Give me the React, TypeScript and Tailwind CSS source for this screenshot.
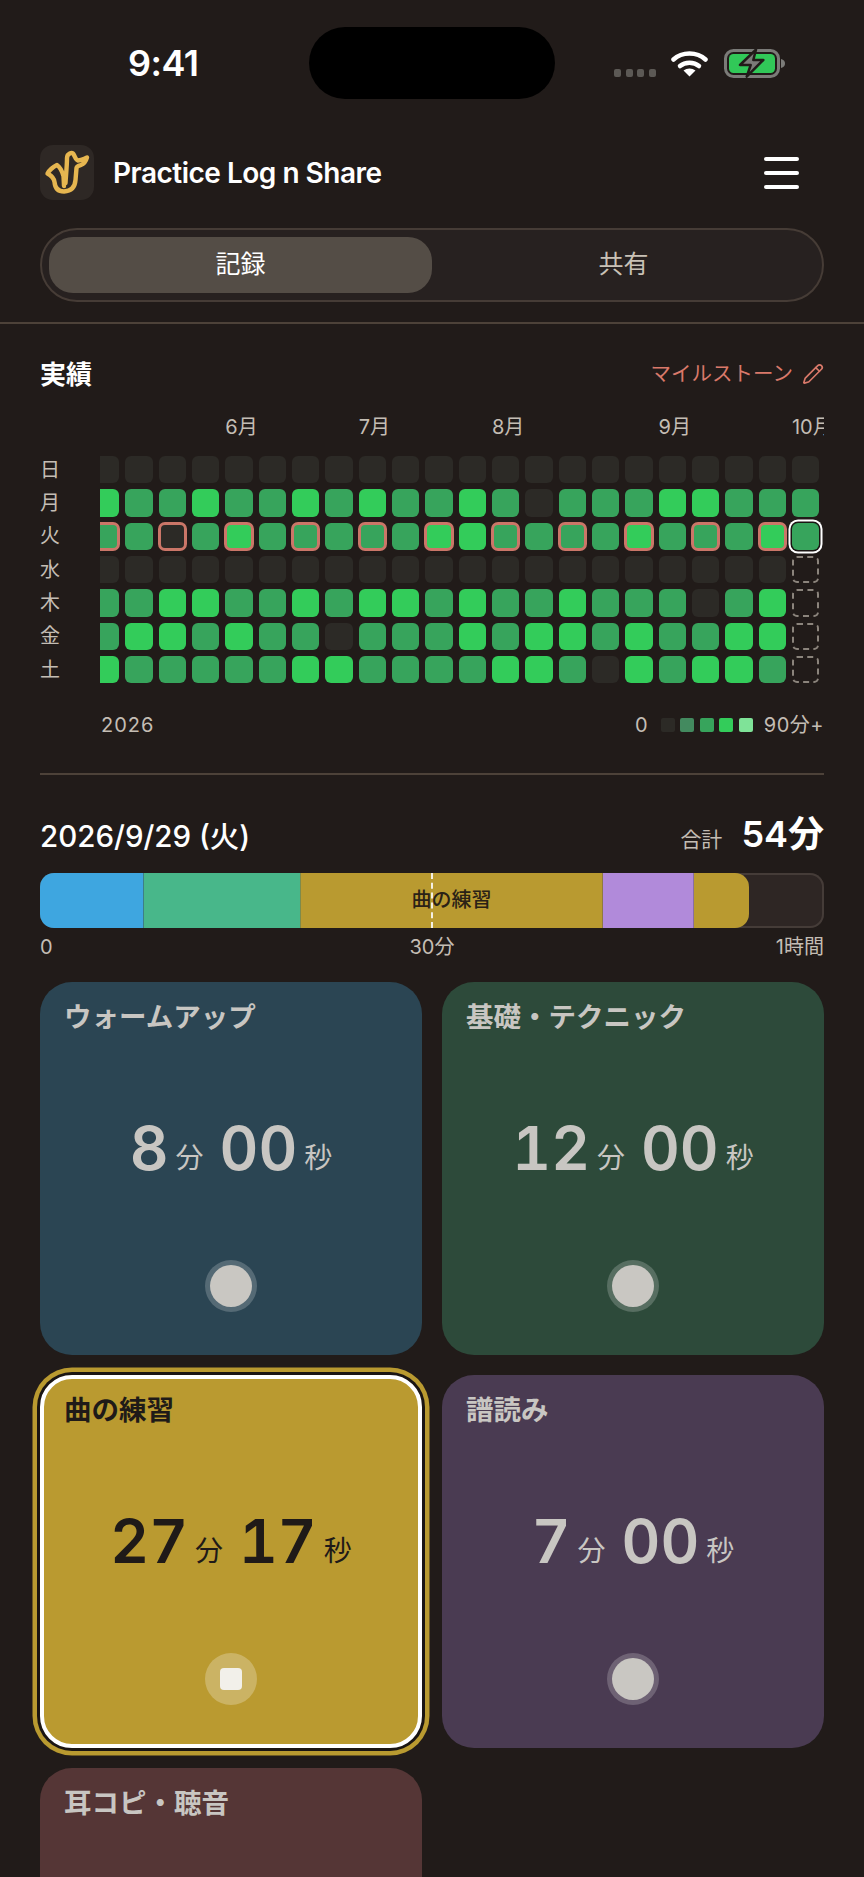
import React from 'react';
import { Pencil } from 'lucide-react';

const FONT = 'font-[Inter,"Noto_Sans_CJK_JP",sans-serif]';

const weekdays = ['日', '月', '火', '水', '木', '金', '土'];

// heatmap rows, one string per weekday, one digit per week (0 empty, 2 mid, 3 bright, x not yet)
const heat = [
  '0000000000000000000000',
  '3223223232232022233222',
  '2202322222332222322232',
  '000000000000000000000x',
  '223322323323223222023x',
  '233232202223233232233x',
  '322222332222332032332x',
];

const monthAt: Record<number, string> = { 4: '6月', 8: '7月', 12: '8月', 17: '9月', 21: '10月' };

const cellColor: Record<string, string> = {
  '0': 'bg-[#2c2a26]',
  '2': 'bg-[#37a45c]',
  '3': 'bg-[#33cc5a]',
};

function HeatCell({ level, milestone, selected }: { level: string; milestone: boolean; selected: boolean }) {
  if (level === 'x') {
    return <div className="h-[27.33px] w-[27.33px] rounded-[5px] border-2 border-dashed border-[#8b847c]" />;
  }
  return (
    <div
      className={`h-[27.33px] w-[27.33px] rounded-[6px] ${cellColor[level]} ${
        milestone ? 'outline-[3px] outline-offset-[-2px] outline-[#cb7668]' : ''
      } ${selected ? 'shadow-[0_0_0_1.5px_#1a1513,0_0_0_3.5px_#ffffff]' : ''}`}
    />
  );
}

function Heatmap() {
  const weeks = Array.from({ length: 22 }, (_, i) => i);
  return (
    <div className="mt-[19px] flex">
      <div className="w-[60px] shrink-0">
        <div className="h-[43px]" />
        <div className="flex flex-col gap-[6px]">
          {weekdays.map((d) => (
            <div key={d} className="flex h-[27.33px] items-center text-[20px] leading-none text-[#c4bdb4]">
              {d}
            </div>
          ))}
        </div>
      </div>
      <div className="h-[271px] w-[725px] overflow-hidden">
        <div className="ml-[-8px] flex gap-[6px]">
          {weeks.map((w) => (
            <div key={w} className="w-[27.33px] shrink-0">
              <div className="h-[43px] whitespace-nowrap text-[20px] leading-[28px] text-[#c4bdb4]">{monthAt[w]}</div>
              <div className="flex flex-col gap-[6px]">
                {heat.map((row, r) => (
                  <HeatCell
                    key={r}
                    level={row[w]}
                    milestone={r === 2 && w % 2 === 0 && w < 21}
                    selected={r === 2 && w === 21}
                  />
                ))}
              </div>
            </div>
          ))}
        </div>
      </div>
    </div>
  );
}

function StatusBar() {
  return (
    <div className="flex h-[99px] items-start pt-[27px]">
      <div className="flex h-[72px] w-[309px] items-center pl-[128px] text-[36px] font-semibold tracking-[-0.5px] text-white">
        9:41
      </div>
      <div className="h-[72px] w-[246px] rounded-[36px] bg-black" />
      <div className="relative flex h-[72px] w-[309px] items-start pl-[59px] pt-[22px]">
        <div className="mt-[20px] flex gap-[4.5px]">
          {[0, 1, 2, 3].map((i) => (
            <span key={i} className="h-[8px] w-[7px] rounded-[2px] bg-[#5c5955]" />
          ))}
        </div>
        <svg className="ml-[15px]" width="37" height="28" viewBox="0 0 37 28" fill="none">
          <path d="M2.5 10.5C11 2.5 26 2.5 34.5 10.5" stroke="#fff" strokeWidth="4.5" strokeLinecap="round" />
          <path d="M9 17C14 12.5 23 12.5 28 17" stroke="#fff" strokeWidth="4.5" strokeLinecap="round" />
          <path d="M18.5 27.5L12.5 21.5C16 18.8 21 18.8 24.5 21.5Z" fill="#fff" />
        </svg>
        <svg className="ml-[16px]" width="62" height="29" viewBox="0 0 62 29" fill="none">
          <rect x="1.5" y="1.5" width="53" height="26" rx="8" stroke="#7b7b78" strokeWidth="3" />
          <rect x="5" y="5" width="46" height="19" rx="4.5" fill="#31c858" />
          <path d="M57 10C60 10.5 61 12.5 61 14.5C61 16.5 60 18.5 57 19Z" fill="#7b7b78" />
          <path d="M32 0.5L16 16H26.7L22.7 27.7L39.3 11H29.3Z" fill="#7b7b78" stroke="#211b19" strokeWidth="2.5" strokeLinejoin="round" />
        </svg>
      </div>
    </div>
  );
}

function Header() {
  return (
    <div className="mx-[40px] mt-[46px] flex h-[55px] items-center justify-between">
      <div className="flex items-center gap-[19px]">
        <div className="h-[55px] w-[54px] rounded-[13px] bg-[#2e2825]">
          <svg width="54" height="55" viewBox="0 0 54 55" fill="none">
            <path
              d="M25.5 38C26 30 27 20 27 13C27 9 32 6 34 10C35.5 13 36 15 38 15.5C41 15.5 44 14 47 12.5C46 16 44 19 41 20C38 21 37 21 36.5 23L35.5 35C35 42 31 46 24 46.5C18 46.5 15 43 14.5 37C14 33 12 31 7.5 28.5C10 24 13 22 17 20C20 22 22 26 23.5 31L24 41"
              stroke="#e6b650"
              strokeWidth="4.4"
              strokeLinecap="round"
              strokeLinejoin="round"
            />
          </svg>
        </div>
        <span className="text-[28px] font-semibold tracking-[-0.5px] text-white">Practice Log n Share</span>
      </div>
      <div className="mr-[25px] flex w-[35px] flex-col gap-[10px]">
        <span className="h-[4px] rounded-full bg-white" />
        <span className="h-[4px] rounded-full bg-white" />
        <span className="h-[4px] rounded-full bg-white" />
      </div>
    </div>
  );
}

function Tabs() {
  return (
    <div className="mx-[40px] mt-[28px] flex h-[74px] items-center rounded-[37px] border-2 border-[#463c36] bg-[#272120] px-[7px]">
      <div className="flex h-[56px] w-[383px] items-center justify-center rounded-[24px] bg-[#544d46] text-[25px] text-white">
        記録
      </div>
      <div className="flex h-[56px] flex-1 items-center justify-center text-[25px] text-[#c9c1b6]">共有</div>
    </div>
  );
}

function Legend() {
  const swatches = ['bg-[#2c2a26]', 'bg-[#438a5f]', 'bg-[#37a45c]', 'bg-[#33cc5a]', 'bg-[#7fe398]'];
  return (
    <div className="mt-[27px] flex h-[28px] items-center justify-between pl-[60px] text-[20px] text-[#c4bdb4]">
      <span className="ml-[1px] tracking-[1px]">2026</span>
      <div className="flex items-center">
        <span>0</span>
        <div className="ml-[13px] flex gap-[5.5px]">
          {swatches.map((s) => (
            <span key={s} className={`h-[14px] w-[14px] rounded-[2px] ${s}`} />
          ))}
        </div>
        <span className="ml-[11px] tracking-[0.5px]">90分+</span>
      </div>
    </div>
  );
}

function DayBar() {
  return (
    <>
      <div className="relative mt-[22px] flex h-[55px] overflow-hidden rounded-[14px] bg-[#2e2624] shadow-[inset_0_0_0_2px_#453c38]">
        <div className="w-[103px] bg-[#3ea6e0]" />
        <div className="w-[157px] border-l border-[#3d7f86] bg-[#48b78a]" />
        <div className="flex w-[302px] items-center justify-center border-l border-[#7f8a4a] bg-[#b99a30] pb-[2px] text-[20px] font-medium text-[#2a2216]">
          曲の練習
        </div>
        <div className="w-[91px] border-l border-[#8f7a40] bg-[#b18ada]" />
        <div className="w-[56px] rounded-r-[14px] border-l border-[#8a6fa0] bg-[#b99a30]" />
        <div className="absolute bottom-0 left-[391px] top-0 border-l-2 border-dashed border-[#f4f0e4]" />
      </div>
      <div className="mt-[4px] grid h-[28px] grid-cols-3 items-center text-[20px] text-[#c4bdb4]">
        <span>0</span>
        <span className="text-center">30分</span>
        <span className="text-right">1時間</span>
      </div>
    </>
  );
}

type Card = { title: string; min: string; sec: string; bg: string; active?: boolean };

const cards: Card[] = [
  { title: 'ウォームアップ', min: '8', sec: '00', bg: 'bg-[#2b4553]' },
  { title: '基礎・テクニック', min: '12', sec: '00', bg: 'bg-[#2d4a3a]' },
  { title: '曲の練習', min: '27', sec: '17', bg: 'bg-[#ba9a30]', active: true },
  { title: '譜読み', min: '7', sec: '00', bg: 'bg-[#4a3b52]' },
  { title: '耳コピ・聴音', min: '5', sec: '00', bg: 'bg-[#553636]' },
];

function TimerCard({ card }: { card: Card }) {
  const ink = card.active ? 'text-[#1f1a18]' : 'text-[#c8c6c2]';
  return (
    <div
      className={`flex h-[373px] flex-col rounded-[32px] border-4 ${card.bg} ${ink} ${
        card.active
          ? 'border-white shadow-[0_0_0_3px_#1a1513,0_0_0_7.5px_#b99a30]'
          : 'border-transparent'
      }`}
    >
      <div className="mt-[11px] h-[40px] pl-[20px] text-[27.5px] font-semibold leading-[40px]">{card.title}</div>
      <div className="mt-[80px] flex h-[62px] items-baseline justify-center tabular-nums">
        <span className="text-[60px] font-semibold leading-[62px]">{card.min}</span>
        <span className="ml-[7px] -translate-y-[2px] text-[28px] leading-none">分</span>
        <span className="ml-[16px] text-[60px] font-semibold leading-[62px]">{card.sec}</span>
        <span className="ml-[7px] -translate-y-[2px] text-[28px] leading-none">秒</span>
      </div>
      <div className="mt-[81px] flex justify-center">
        {card.active ? (
          <div className="flex h-[52px] w-[52px] items-center justify-center rounded-full bg-white/25">
            <span className="h-[22px] w-[22px] rounded-[4px] bg-[#f2f0ea]" />
          </div>
        ) : (
          <div className="flex h-[52px] w-[52px] items-center justify-center rounded-full bg-white/20">
            <span className="h-[42px] w-[42px] rounded-full bg-[#c9c7c2]" />
          </div>
        )}
      </div>
    </div>
  );
}

export default function App() {
  return (
    <div className={`h-[1877px] w-[864px] overflow-hidden bg-[#211b19] ${FONT}`}>
      <StatusBar />
      <Header />
      <Tabs />
      <div className="mt-[20px] h-[2px] bg-[#4d4239]" />
      <div className="mx-[40px]">
        <div className="mt-[30px] flex h-[40px] items-center justify-between">
          <span className="text-[26px] font-semibold text-white">実績</span>
          <div className="flex items-center gap-[9px] text-[20.5px] text-[#d9796a]">
            <span>マイルストーン</span>
            <Pencil size={22} strokeWidth={1.8} />
          </div>
        </div>
        <Heatmap />
        <Legend />
        <div className="mt-[34px] h-[2px] bg-[#4d4239]" />
        <div className="mt-[32px] flex h-[44px] items-baseline justify-between">
          <span className="text-[29.5px] font-medium text-white">2026/9/29 (火)</span>
          <div className="flex items-baseline gap-[19px]">
            <span className="text-[21px] text-[#c4bdb4]">合計</span>
            <span className="text-[36px] font-semibold text-white">54分</span>
          </div>
        </div>
        <DayBar />
        <div className="mt-[22px] grid grid-cols-2 gap-[20px]">
          {cards.map((c) => (
            <TimerCard key={c.title} card={c} />
          ))}
        </div>
      </div>
    </div>
  );
}
